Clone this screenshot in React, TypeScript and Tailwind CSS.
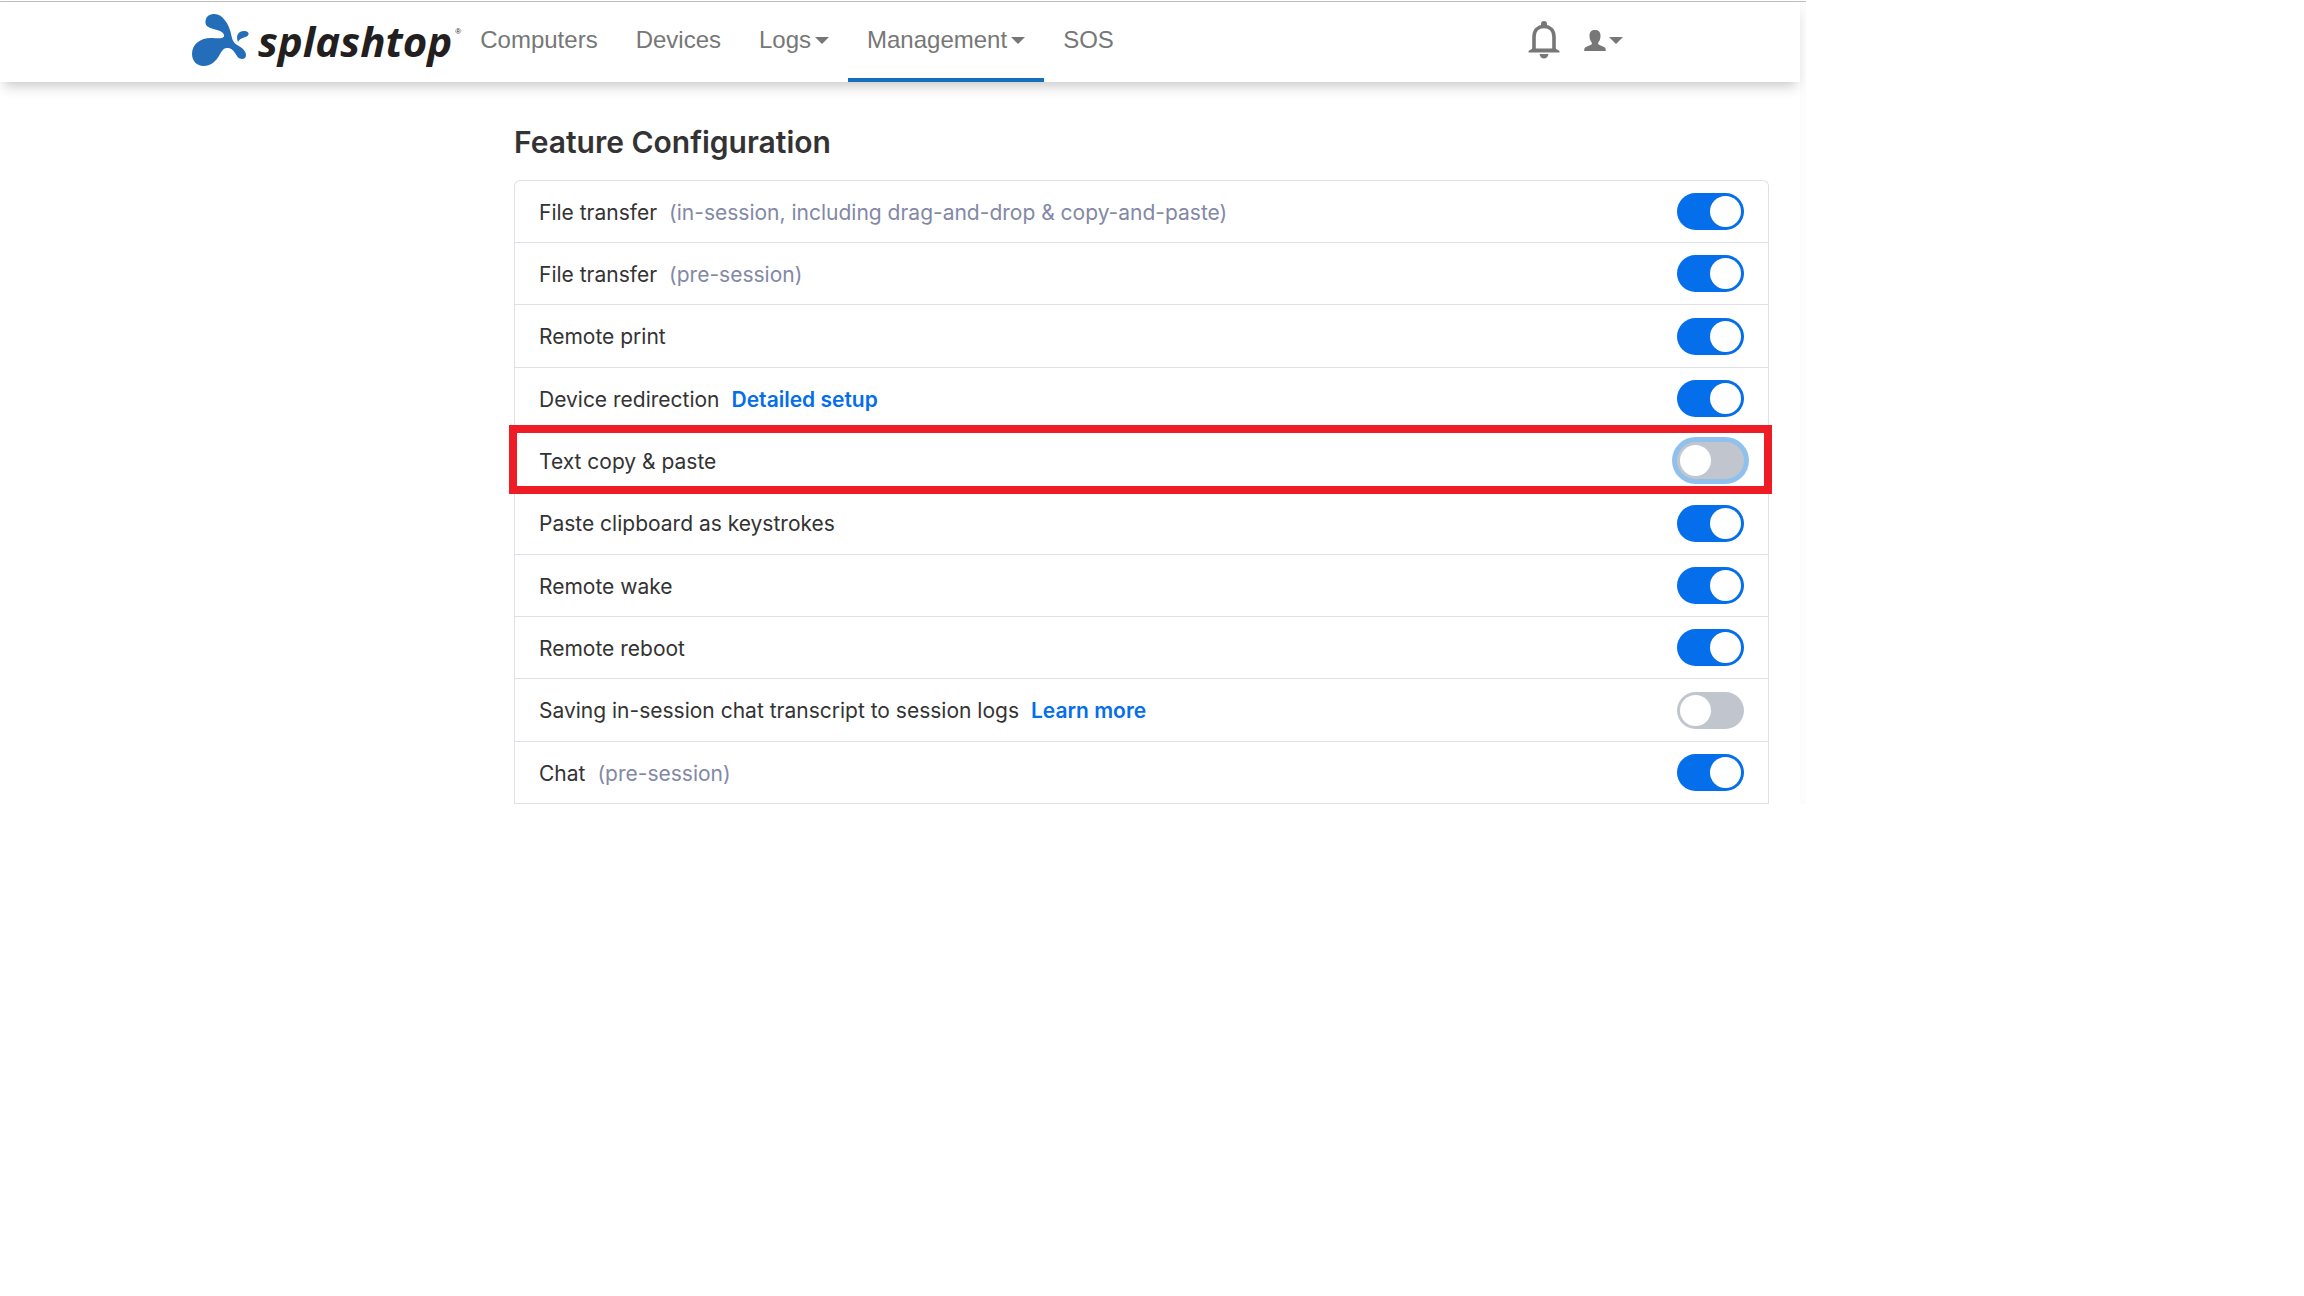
import { useId } from "react";
import clsx from "clsx";

type Feature = {
  name: string;
  note?: string;
  link?: string;
  enabled: boolean;
  highlighted?: boolean;
};

const FEATURES: Feature[] = [
  {
    name: "File transfer",
    note: "(in-session, including drag-and-drop & copy-and-paste)",
    enabled: true,
  },
  { name: "File transfer", note: "(pre-session)", enabled: true },
  { name: "Remote print", enabled: true },
  { name: "Device redirection", link: "Detailed setup", enabled: true },
  { name: "Text copy & paste", enabled: false, highlighted: true },
  { name: "Paste clipboard as keystrokes", enabled: true },
  { name: "Remote wake", enabled: true },
  { name: "Remote reboot", enabled: true },
  {
    name: "Saving in-session chat transcript to session logs",
    link: "Learn more",
    enabled: false,
  },
  { name: "Chat", note: "(pre-session)", enabled: true },
];

const NAV = [
  { label: "Computers" },
  { label: "Devices" },
  { label: "Logs", menu: true },
  { label: "Management", menu: true, active: true },
  { label: "SOS" },
];

function Caret() {
  return (
    <svg viewBox="0 0 14 7" className="h-[7px] w-[14px] shrink-0 fill-current" aria-hidden="true">
      <path d="M0 0h14L7 7z" />
    </svg>
  );
}

function Logo() {
  return (
    <a href="#" aria-label="Splashtop home" className="flex h-20 shrink-0 items-start pt-3">
      <svg viewBox="0 0 57 52" className="h-[52px] w-[57px] fill-[#246eb9]" aria-hidden="true">
        <path d="M13.500 7C14 2.500 17.500 0 22.500 0C30 0 37 9 39.500 22C40.500 27 42.500 29.500 46 31.500C50.500 34 54 37 54 41C54 43.500 52.500 45 50 45C46.500 45 45 42 43 39C40.500 35 38 33.500 34.500 34C31 34.500 29.500 37.500 27.500 41C24 47.500 18.500 52 11.500 52C5 52 0 47 0 40C0 30 8.500 24 19 24C24 24 27.500 25 31 23.500C33.500 22 31.500 18.500 28 17C22 14.500 12.500 14.500 13.500 7Z" />
        <path d="M46 28C43.500 21 46.500 17 52 17C55 17 57 18.500 56.500 20.500C55.500 24 48.500 22.500 46 28Z" />
      </svg>
      <span className="ml-[9px] font-['Open_Sans','Noto_Sans',sans-serif] text-[42px] leading-[54px] font-bold text-[#231f20] italic">
        splashtop
      </span>
      <span className="mt-3 ml-[3px] font-['Liberation_Sans',Arial,sans-serif] text-[8px] leading-3 text-[#231f20]">
        ®
      </span>
    </a>
  );
}

function BellIcon() {
  return (
    <svg viewBox="0 0 32 38" className="h-[38px] w-8" fill="none" aria-hidden="true">
      <path
        d="M6 29.500V16C6 9.500 10 5.500 16 5.500S26 9.500 26 16V29.500"
        stroke="currentColor"
        strokeWidth="3.600"
      />
      <path
        d="M13 5V3C13 1 14 0 16 0S19 1 19 3V5ZM0.500 31.500V30L4.500 27.500H27.500L31.500 30V31.500ZM11.500 33H20.500C20 36 18 37.500 16 37.500S12 36 11.500 33Z"
        fill="currentColor"
      />
    </svg>
  );
}

function UserIcon() {
  return (
    <svg viewBox="0 0 22 21" className="h-[21px] w-[22px] fill-current" aria-hidden="true">
      <path d="M11 0C14.500 0 16.500 2 16.500 5.500C16.500 8.500 16 10.500 14.500 12C14 13 14 14 14.500 14.500L20 17C21.500 17.800 21.800 18.500 21.800 21H0.200C0.200 18.500 0.500 17.800 2 17L7.500 14.500C8 14 8 13 7.500 12C6 10.500 5.500 8.500 5.500 5.500C5.500 2 7.500 0 11 0Z" />
    </svg>
  );
}

function Header() {
  return (
    <header className="mr-[6px] flex h-20 bg-white pr-[177px] pl-48 text-[#777] shadow-[0_8px_12px_-4px_rgba(0,0,0,0.22)]">
      <Logo />
      <nav className="flex font-['Liberation_Sans',Arial,sans-serif] text-2xl">
        {NAV.map((item) => {
          const classes = clsx(
            "flex h-20 items-center gap-1 border-b-4 px-[19px]",
            item.active ? "border-[#166fb9]" : "border-transparent",
          );
          return item.menu ? (
            <button key={item.label} type="button" className={classes}>
              {item.label}
              <Caret />
            </button>
          ) : (
            <a key={item.label} href="#" className={classes}>
              {item.label}
            </a>
          );
        })}
      </nav>
      <div className="ml-auto flex h-[76px] items-center gap-6">
        <button type="button" aria-label="Notifications">
          <BellIcon />
        </button>
        <button type="button" aria-label="Account" className="flex items-center gap-[3px]">
          <UserIcon />
          <Caret />
        </button>
      </div>
    </header>
  );
}

function FeatureRow({ feature }: { feature: Feature }) {
  const id = useId();

  return (
    <li className="relative flex min-h-[62px] items-center justify-between border-b border-[#dee2e6] pr-6 pl-6 nth-[3n]:min-h-[63px]">
      <div className="flex items-center gap-3 pt-0.5">
        <label htmlFor={id}>{feature.name}</label>
        {feature.note && <span className="text-[#8288a6]">{feature.note}</span>}
        {feature.link && (
          <a href="#" className="font-semibold text-[#046eeb]">
            {feature.link}
          </a>
        )}
      </div>
      <input
        id={id}
        type="checkbox"
        role="switch"
        defaultChecked={feature.enabled}
        className={clsx(
          "h-[37px] w-[67px] shrink-0 appearance-none rounded-full bg-[#c1c6ce] p-[3px]",
          "before:block before:size-[31px] before:rounded-full before:bg-white",
          "checked:bg-[#046eeb] checked:before:translate-x-[30px]",
          feature.highlighted && "ring-5 ring-[#90c1ee]",
        )}
      />
      {feature.highlighted && (
        <div className="pointer-events-none absolute -top-[5px] -right-1 -bottom-[3px] -left-1.5 z-10 border-8 border-[#ee1c25]" />
      )}
    </li>
  );
}

export default function App() {
  return (
    <div className="min-h-screen bg-white">
      <div className="w-full max-w-[1806px] overflow-hidden">
        <div className="mt-px h-px bg-[#bdbdbd]" />
        <div className="bg-linear-to-l from-[#fcfcfc] from-[6px] to-white to-[6px]">
          <Header />
          <main className="mr-[37px] ml-[514px] pt-9 font-[Inter,'Noto_Sans',sans-serif] text-[#333]">
            <h1 className="text-[30px] leading-12 font-semibold">Feature Configuration</h1>
            <ul className="mt-[14px] rounded-t-md border border-b-0 border-[#dee2e6] text-[21px] leading-8">
              {FEATURES.map((feature) => (
                <FeatureRow key={feature.name + (feature.note ?? "")} feature={feature} />
              ))}
            </ul>
          </main>
        </div>
      </div>
    </div>
  );
}
